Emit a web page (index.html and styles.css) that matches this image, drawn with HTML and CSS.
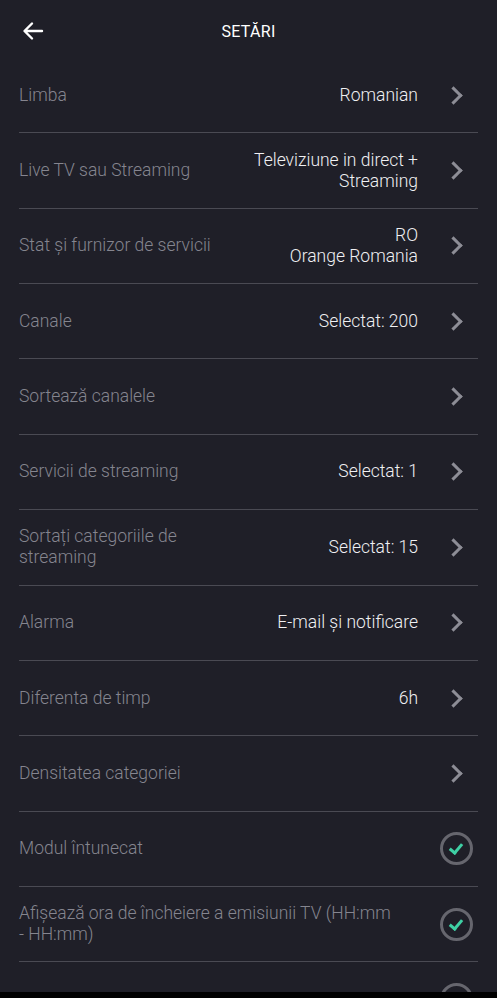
FILE: index.html
```html
<!DOCTYPE html>
<html lang="ro">
<head>
    <meta charset="UTF-8">
    <meta name="viewport" content="width=device-width, initial-scale=1.0">
    <title>Setări</title>
    <link rel="stylesheet" href="styles.css">
</head>
<body>
    <div class="screen">
        <div class="header">
            <svg class="back" width="22" height="20" viewBox="0 0 22 20">
                <path d="M20 10H3M10 2.5L2.5 10L10 17.5" fill="none" stroke="#fff" stroke-width="2.4" stroke-linecap="round" stroke-linejoin="round"/>
            </svg>
            <div class="title">SETĂRI</div>
        </div>

        <div class="list">
            <div class="row">
                <div class="label">Limba</div>
                <div class="value">Romanian</div>
                <span class="chev"></span>
            </div>
            <div class="row">
                <div class="label">Live TV sau Streaming</div>
                <div class="value">Televiziune in direct + Streaming</div>
                <span class="chev"></span>
            </div>
            <div class="row">
                <div class="label">Stat și furnizor de servicii</div>
                <div class="value">RO<br>Orange Romania</div>
                <span class="chev"></span>
            </div>
            <div class="row">
                <div class="label">Canale</div>
                <div class="value">Selectat: 200</div>
                <span class="chev"></span>
            </div>
            <div class="row">
                <div class="label">Sortează canalele</div>
                <div class="value"></div>
                <span class="chev"></span>
            </div>
            <div class="row">
                <div class="label">Servicii de streaming</div>
                <div class="value">Selectat: 1</div>
                <span class="chev"></span>
            </div>
            <div class="row">
                <div class="label">Sortați categoriile de streaming</div>
                <div class="value">Selectat: 15</div>
                <span class="chev"></span>
            </div>
            <div class="row">
                <div class="label">Alarma</div>
                <div class="value">E-mail și notificare</div>
                <span class="chev"></span>
            </div>
            <div class="row">
                <div class="label">Diferenta de timp</div>
                <div class="value">6h</div>
                <span class="chev"></span>
            </div>
            <div class="row">
                <div class="label">Densitatea categoriei</div>
                <div class="value"></div>
                <span class="chev"></span>
            </div>
            <div class="row">
                <div class="label wide">Modul întunecat</div>
                <span class="check"></span>
            </div>
            <div class="row">
                <div class="label wide">Afișează ora de încheiere a emisiunii TV (HH:mm - HH:mm)</div>
                <span class="check"></span>
            </div>
            <div class="row">
                <div class="label wide"></div>
                <span class="check"></span>
            </div>
        </div>
    </div>
    <div class="navbar"></div>
</body>
</html>
```

FILE: styles.css
```css
body {
    margin: 0;
    background-color: #000;
    font-family: Roboto, "Noto Sans", sans-serif;
    color: #ececef;
}
.screen {
    height: 992px;
    overflow: hidden;
    background-color: #1f1f28;
}
.header {
    height: 58px;
    display: flex;
    align-items: center;
    justify-content: center;
    position: relative;
}
.back {
    position: absolute;
    left: 22px;
    top: 21px;
}
.title {
    font-size: 16px;
    font-weight: 400;
    letter-spacing: 0.3px;
    color: #fff;
    margin-top: 4px;
}
.list {
    padding: 0 19px;
}
.row {
    height: 75.36px;
    box-sizing: border-box;
    border-bottom: 1px solid #4a4a53;
    display: flex;
    align-items: center;
    font-size: 17.5px;
    font-weight: 300;
    line-height: 21px;
}
.label {
    flex: 1;
    color: #85858f;
}
.label.wide {
    flex: 1;
    padding-right: 44px;
}
.value {
    flex: 1;
    text-align: right;
    color: #f0f0f3;
}
.chev {
    width: 10px;
    height: 10px;
    border-top: 3px solid #8d8d96;
    border-right: 3px solid #8d8d96;
    transform: rotate(45deg);
    margin: 0 18px 0 29px;
}
.check {
    width: 27px;
    height: 27px;
    border: 3px solid #66666e;
    border-radius: 50%;
    position: relative;
    margin-right: 5px;
    flex-shrink: 0;
}
.check::after {
    content: "";
    position: absolute;
    left: 9px;
    top: 6px;
    width: 5px;
    height: 10px;
    border-right: 3.5px solid #3fd0a5;
    border-bottom: 3.5px solid #3fd0a5;
    transform: rotate(40deg);
}
.navbar {
    height: 6px;
    background-color: #000;
}
```
